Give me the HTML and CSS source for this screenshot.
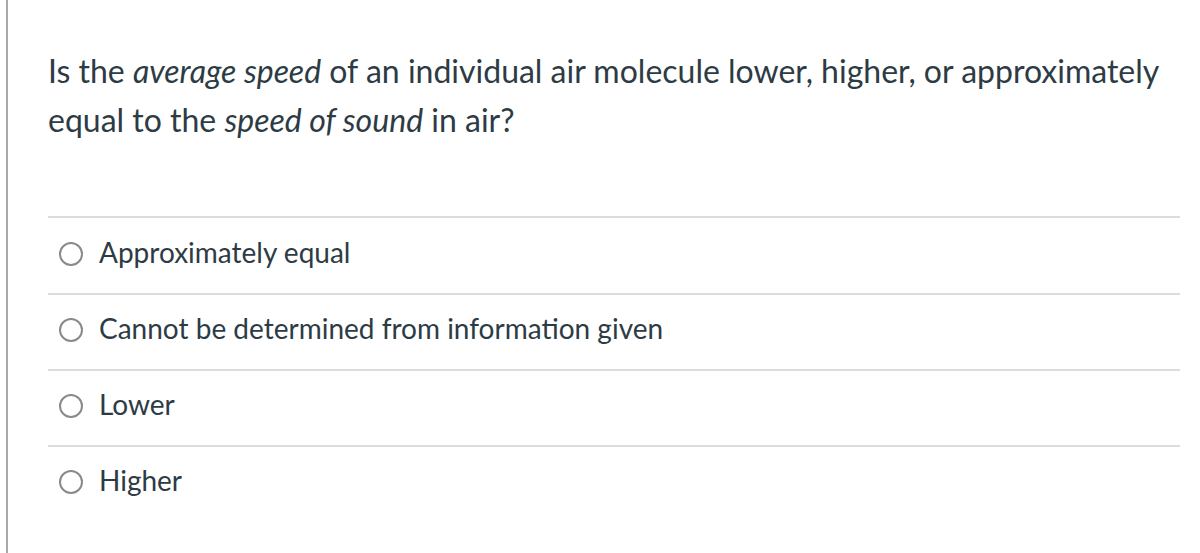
FILE: index.html
```html
<!DOCTYPE html>
<html>
<head>
<meta charset="utf-8">
<link rel="stylesheet" href="styles.css">
</head>
<body>
<div class="frame">
  <div class="question">
    <p class="text">Is the <em>average speed</em> of an individual air molecule lower, higher, or approximately equal to the <em>speed of sound</em> in air?</p>
    <div class="answers">
      <label class="answer"><span class="radio"></span><span class="label">Approximately equal</span></label>
      <label class="answer"><span class="radio"></span><span class="label">Cannot be determined from information given</span></label>
      <label class="answer"><span class="radio"></span><span class="label">Lower</span></label>
      <label class="answer"><span class="radio"></span><span class="label">Higher</span></label>
    </div>
  </div>
</div>
</body>
</html>
```
FILE: styles.css
```css
html, body {
  margin: 0;
  padding: 0;
  background: #fff;
}
body {
  font-family: Lato, "Open Sans", sans-serif;
  color: #2d3b45;
}
.frame {
  margin-left: 6px;
  border-left: 2px solid #a9a9a9;
  height: 553px;
  box-sizing: border-box;
}
.question {
  padding: 46px 20px 0 40px;
}
.text {
  margin: 0;
  font-size: 32px;
  line-height: 49px;
}
.text em {
  font-style: italic;
}
.answers {
  margin-top: 72px;
}
.answer {
  display: flex;
  align-items: center;
  height: 74px;
  border-top: 2px solid #dcdcdc;
}
.answer:first-child {
  height: 75px;
}
.radio {
  width: 20px;
  height: 20px;
  border: 2px solid #8a8a8a;
  border-radius: 50%;
  margin-left: 11px;
  margin-right: 16px;
  margin-bottom: 4px;
  flex: none;
}
.label {
  font-size: 28px;
  margin-bottom: 8px;
}
```
